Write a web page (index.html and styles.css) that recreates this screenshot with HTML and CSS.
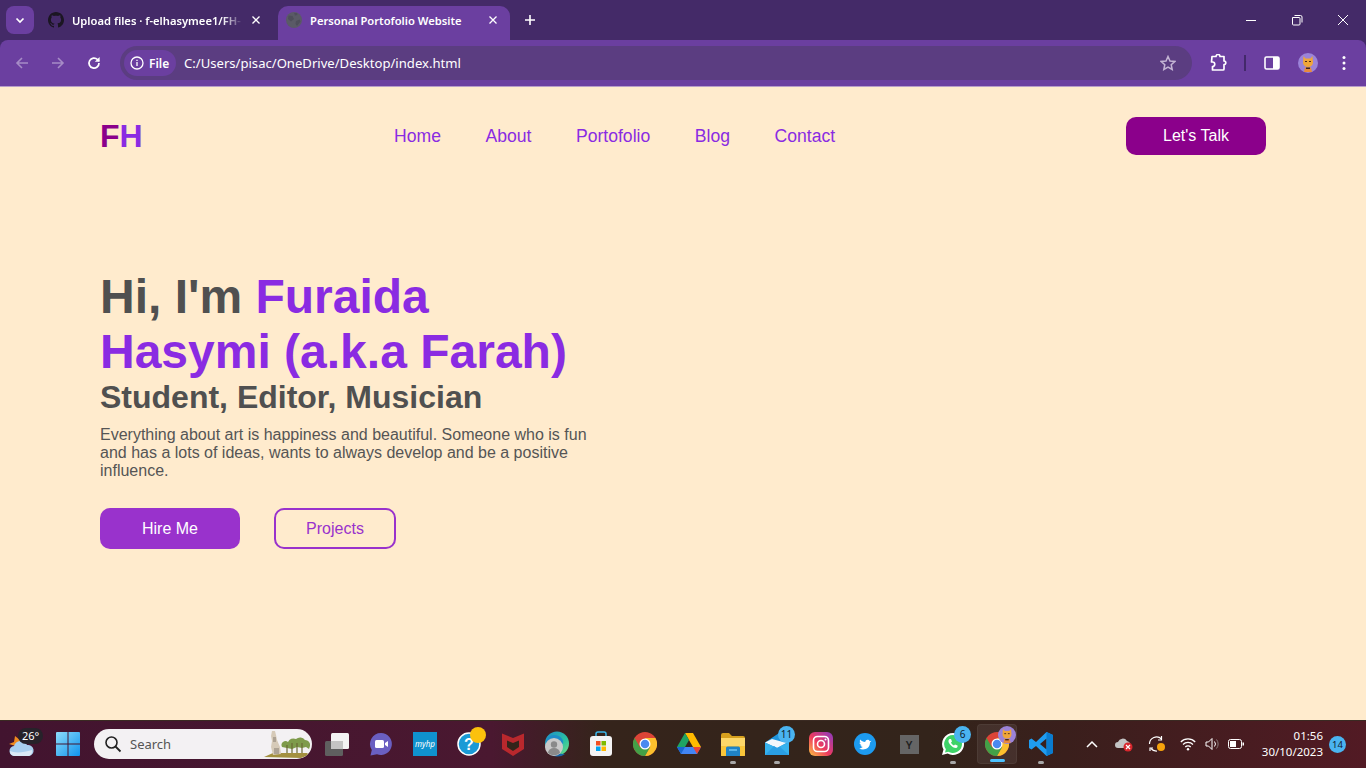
FILE: index.html
```html
<!DOCTYPE html>
<html lang="en">
<head>
<meta charset="utf-8">
<title>Personal Portofolio Website</title>
<link rel="stylesheet" href="styles.css">
</head>
<body>
<header class="browser">
  <div class="tabstrip">
    <button class="tab-search"><svg width="12" height="12" viewBox="0 0 12 12"><path d="M2.5 4.5 6 8l3.5-3.5" fill="none" stroke="#fff" stroke-width="1.7"/></svg></button>
    <div class="tab first">
      <svg class="fav" width="16" height="16" viewBox="0 0 16 16"><path fill="#1b1622" d="M8 0C3.6 0 0 3.6 0 8c0 3.5 2.3 6.5 5.5 7.6.4.1.5-.2.5-.4v-1.4c-2.2.5-2.7-1-2.7-1-.4-.9-.9-1.2-.9-1.2-.7-.5.1-.5.1-.5.8.1 1.2.8 1.2.8.7 1.2 1.9.9 2.3.7.1-.5.3-.9.5-1.1-1.8-.2-3.6-.9-3.6-4 0-.9.3-1.6.8-2.1-.1-.2-.4-1 .1-2.1 0 0 .7-.2 2.2.8.6-.2 1.3-.3 2-.3s1.4.1 2 .3c1.5-1 2.2-.8 2.2-.8.4 1.1.2 1.9.1 2.1.5.6.8 1.3.8 2.1 0 3.1-1.9 3.7-3.7 3.9.3.3.6.8.6 1.5v2.2c0 .2.1.5.6.4C13.7 14.5 16 11.5 16 8c0-4.4-3.6-8-8-8z"/></svg>
      <span class="tab-title faded">Upload files · f-elhasymee1/FH-</span>
      <svg class="tab-x" width="10" height="10" viewBox="0 0 10 10"><path d="M1.500 1.500l7 7m0-7l-7 7" stroke="#fff" stroke-width="1.300"/></svg>
    </div>
    <div class="tab active">
      <svg class="fav" width="16" height="16" viewBox="0 0 16 16"><circle cx="8" cy="8" r="8" fill="#5a5a66"/><path d="M2.500 3.500l4 .5 1.500 3-3 2.500-3-2.500zM10 9l3.500-1.500 1 2-3.500 4.500-1.500-2zM8 1h3l.5 2-2.500.5z" fill="#4e4e5a"/></svg>
      <span class="tab-title">Personal Portofolio Website</span>
      <svg class="tab-x" width="10" height="10" viewBox="0 0 10 10"><path d="M1.500 1.500l7 7m0-7l-7 7" stroke="#fff" stroke-width="1.300"/></svg>
    </div>
    <svg class="newtab" width="12" height="12" viewBox="0 0 12 12"><path d="M6 1v10M1 6h10" stroke="#fff" stroke-width="1.600"/></svg>
    <div class="win-controls">
      <svg width="12" height="12" viewBox="0 0 12 12"><path d="M1 6.500h10" stroke="#fff"/></svg>
      <svg width="12" height="12" viewBox="0 0 12 12"><path d="M1.500 3.500h6.500a1 1 0 0 1 1 1V10a1 1 0 0 1-1 1H2.500a1 1 0 0 1-1-1zM3.500 1.500h6a1.500 1.500 0 0 1 1.500 1.500v5.500" fill="none" stroke="#fff"/></svg>
      <svg width="12" height="12" viewBox="0 0 12 12"><path d="M1 1l10 10m0-10L1 11" stroke="#fff"/></svg>
    </div>
  </div>
  <div class="toolbar">
    <svg class="tb-ico" width="16" height="16" viewBox="0 0 16 16"><path d="M14 8H3M8 3L3 8l5 5" fill="none" stroke="#a68cc6" stroke-width="1.600"/></svg>
    <svg class="tb-ico" width="16" height="16" viewBox="0 0 16 16"><path d="M2 8h11M8 3l5 5-5 5" fill="none" stroke="#a68cc6" stroke-width="1.600"/></svg>
    <svg class="tb-ico" width="16" height="16" viewBox="0 0 16 16"><path d="M13 8a5 5 0 1 1-1.500-3.500L13 6" fill="none" stroke="#fff" stroke-width="1.700"/><path d="M13.600 2v4.800H8.800z" fill="#fff"/></svg>
    <div class="omnibox">
      <div class="chip">
        <svg width="14" height="14" viewBox="0 0 14 14"><circle cx="7" cy="7" r="6" fill="none" stroke="#fff" stroke-width="1.300"/><path d="M7 6v4M7 3.800v1.200" stroke="#fff" stroke-width="1.300"/></svg>
        <span>File</span>
      </div>
      <span class="url">C:/Users/pisac/OneDrive/Desktop/index.html</span>
      <svg class="star" width="16" height="16" viewBox="0 0 16 16"><path d="M8 1.500l2 4.500 4.800.5-3.600 3.200 1 4.800L8 12.100l-4.200 2.400 1-4.800L1.200 6.500 6 6z" fill="none" stroke="#c4b5d4" stroke-width="1.500"/></svg>
    </div>
    <div class="tb-right">
      <svg width="18" height="18" viewBox="0 0 18 18"><path d="M3 2.500h4a2 2 0 0 1 4 0h4v4.500a1.800 1.800 0 0 1 0 3.600V15a1 1 0 0 1-1 1H3.500v-3.500a2 2 0 0 0 0-4.500H2.500z" fill="none" stroke="#fff" stroke-width="1.700" stroke-linejoin="round"/></svg>
      <span class="tb-sep"></span>
      <svg width="16" height="16" viewBox="0 0 16 16"><rect x="1" y="2" width="14" height="12" rx="1.500" fill="none" stroke="#fff" stroke-width="1.600"/><rect x="9" y="2" width="6" height="12" fill="#fff"/></svg>
      <svg width="20" height="20" viewBox="0 0 20 20"><circle cx="10" cy="10" r="10" fill="#9b83d8"/><path d="M5.500 3l2 2.500h5l2-2.500.5 6.500a5 4.500 0 0 1-10 0z" fill="#f0a63a"/><path d="M7 14.500h6l1 4.500H6z" fill="#e98a3c"/><path d="M8 14.500h4v1.500H8z" fill="#40261c"/><path d="M7 8.500h2M11 8.500h2" stroke="#4a2a1a"/></svg>
      <svg width="4" height="16" viewBox="0 0 4 16"><circle cx="2" cy="2.500" r="1.500" fill="#fff"/><circle cx="2" cy="8" r="1.500" fill="#fff"/><circle cx="2" cy="13.500" r="1.500" fill="#fff"/></svg>
    </div>
  </div>
</header>

<div class="page">
  <nav class="site-nav">
    <a class="logo"><span class="logo-f">F</span>H</a>
    <ul class="links">
      <li>Home</li>
      <li>About</li>
      <li>Portofolio</li>
      <li>Blog</li>
      <li>Contact</li>
    </ul>
    <button class="talk">Let's Talk</button>
  </nav>
  <section class="hero">
    <h1>Hi, I'm <span class="accent">Furaida Hasymi (a.k.a Farah)</span></h1>
    <h2>Student, Editor, Musician</h2>
    <p>Everything about art is happiness and beautiful. Someone who is fun and has a lots of ideas, wants to always develop and be a positive influence.</p>
    <div class="actions">
      <button class="btn hire">Hire Me</button>
      <button class="btn projects">Projects</button>
    </div>
  </section>
</div>

<footer class="taskbar">
  <div class="weather">
    <svg width="26" height="24" viewBox="0 0 26 24"><path d="M0 10l5-2 1-6 5 4 5 1-6 6z" fill="#f08a1e"/><path d="M6 22a5 5 0 0 1-1-10 7 7 0 0 1 13-1 5.500 5.500 0 0 1 2 11z" fill="#a9cfef"/><path d="M5 22a5 5 0 0 1-4-5c4 2 13 2 22-1a5.500 5.500 0 0 1-3 6z" fill="#dbe9f6"/></svg>
    <span class="temp">26°</span>
  </div>
  <div class="slot start"><svg width="24" height="24" viewBox="0 0 24 24"><defs><linearGradient id="win" x1="0" y1="0" x2="1" y2="1"><stop offset="0" stop-color="#8edcf9"/><stop offset="1" stop-color="#0f93ee"/></linearGradient></defs><path d="M1 0h10.500v11.500H0V1a1 1 0 0 1 1-1zM12.500 0H23a1 1 0 0 1 1 1v10.500H12.500zM0 12.500h11.500V24H1a1 1 0 0 1-1-1zM12.500 12.500H24V23a1 1 0 0 1-1 1H12.500z" fill="url(#win)"/></svg></div>
  <div class="search">
    <svg width="18" height="18" viewBox="0 0 18 18"><circle cx="7.500" cy="7.500" r="5.500" fill="none" stroke="#222" stroke-width="1.600"/><path d="M11.500 11.500l5 5" stroke="#222" stroke-width="1.800"/></svg>
    <span>Search</span>
    <svg class="search-art" width="48" height="28" viewBox="0 0 48 28"><path d="M0 27l9-4h34l2 2-8 3z" fill="#a3903f"/><path d="M8 1h3l1 4 1 5 3 7 1 7-8 1-2-8 1-6-1-5z" fill="#d6cab8"/><path d="M9 7h3v5H9zM10 18h5v6h-5z" fill="#ada294"/><path d="M18 17a4 4 0 0 1 6-5 6 6 0 0 1 8-3 6 6 0 0 1 9 1 5 5 0 0 1 5 6l-1 3-3-2-4 1-5-1-5 2-5-1z" fill="#7e9b4b"/><path d="M23 15v8M28 13v10M33 13v10M38 13v10" stroke="#6a6a35" stroke-width="1.200"/></svg>
  </div>
  <div class="slot"><svg width="26" height="24" viewBox="0 0 26 24"><rect x="1" y="9" width="18" height="15" rx="1.500" fill="#5f5f5f"/><rect x="7" y="1" width="18" height="16" rx="1.500" fill="#f3f3f3"/><rect x="7" y="9" width="12" height="8" fill="#c4c4c4"/></svg></div>
  <div class="slot"><svg width="24" height="24" viewBox="0 0 24 24"><path d="M12 1a11 11 0 1 1-4 21.300L1.500 23.500 2.800 18A11 11 0 0 1 12 1z" fill="#6a5fc1"/><rect x="6" y="8" width="9" height="8" rx="1.500" fill="#fff"/><path d="M16 11l3-2v6l-3-2z" fill="#fff"/></svg></div>
  <div class="slot"><span class="myhp">myhp</span></div>
  <div class="slot"><svg width="26" height="26" viewBox="0 0 26 26"><circle cx="13" cy="13" r="11" fill="#1a9ad6" stroke="#fff" stroke-width="1.500"/><text x="13" y="19" class="help-q">?</text></svg><span class="dot-yellow"></span></div>
  <div class="slot"><svg width="22" height="24" viewBox="0 0 22 24"><path d="M0 1.500L11 6 22 1.500V17L11 24 0 17z" fill="#b9282d"/><path d="M5 8.500l6 2.500 6-2.500V15l-6 4-6-4z" fill="#33241a"/></svg></div>
  <div class="slot"><svg width="26" height="26" viewBox="0 0 26 26"><defs><linearGradient id="edge" x1="0" y1="0" x2="1" y2="1"><stop offset="0" stop-color="#1d8cc9"/><stop offset=".6" stop-color="#2bc3a2"/><stop offset="1" stop-color="#7de07a"/></linearGradient></defs><circle cx="13" cy="12.500" r="12" fill="url(#edge)"/><path d="M5 22a12 12 0 0 0 16 1z" fill="#1668a8"/><path d="M10 4a8 8 0 0 0-8 8l3 3 14-2c1-5-3-9-9-9z" fill="#1d8cc9"/><circle cx="10" cy="16" r="9" fill="#c9c9c9"/><circle cx="10" cy="13.500" r="3.200" fill="#8a8a8a"/><path d="M4 22a6 5 0 0 1 12 0 9 9 0 0 1-12 0z" fill="#8a8a8a"/></svg></div>
  <div class="slot"><svg width="24" height="26" viewBox="0 0 24 26"><path d="M7 6V3a2 2 0 0 1 2-2h6a2 2 0 0 1 2 2v3" fill="none" stroke="#3bb6ea" stroke-width="1.500"/><rect x="1" y="5" width="22" height="20" rx="3" fill="#f4f4f4"/><rect x="7" y="10" width="4.500" height="4.500" fill="#f25022"/><rect x="12.500" y="10" width="4.500" height="4.500" fill="#7fba00"/><rect x="7" y="15.500" width="4.500" height="4.500" fill="#00a4ef"/><rect x="12.500" y="15.500" width="4.500" height="4.500" fill="#ffb900"/></svg></div>
  <div class="slot"><svg width="24" height="24" viewBox="0 0 48 48"><circle cx="24" cy="24" r="24" fill="#db4437"/><path d="M24 48A24 24 0 0 0 44.800 12H24l10 17.500z" fill="#fbc02d"/><path d="M24 48 34.400 30 24 33 13.600 30 3.200 12A24 24 0 0 0 24 48z" fill="#43a047"/><circle cx="24" cy="24" r="11" fill="#fff"/><circle cx="24" cy="24" r="8.500" fill="#4a89f0"/></svg></div>
  <div class="slot"><svg width="24" height="22" viewBox="0 0 24 22"><path d="M8 0h8l8 14h-8z" fill="#ffba00"/><path d="M8 0l4 7-4 7H0z" fill="#1fa463"/><path d="M0 14h24l-4 7H4z" fill="#4285f4"/><path d="M0 14h8l-4 7z" fill="#1967d2"/><path d="M16 14h8l-4 7z" fill="#ea4335"/></svg></div>
  <div class="slot running"><svg width="24" height="23" viewBox="0 0 24 23"><path d="M0 2a2 2 0 0 1 2-2h6l3 3h11a2 2 0 0 1 2 2v3H0z" fill="#d6a01e"/><path d="M0 5h24v17a1 1 0 0 1-1 1H1a1 1 0 0 1-1-1z" fill="#fcd769"/><path d="M0 13h24v9a1 1 0 0 1-1 1H1a1 1 0 0 1-1-1z" fill="#f8c53a"/><path d="M5 15a1.500 1.500 0 0 1 1.500-1.500h11A1.500 1.500 0 0 1 19 15v8H5z" fill="#1f83c6"/><rect x="8" y="16" width="8" height="2" fill="#5ab4e8"/></svg></div>
  <div class="slot running"><svg width="24" height="22" viewBox="0 0 24 22"><path d="M0 9.500L14 0h3v6l7 3v13H0z" fill="#1f94dc"/><path d="M0 9.500L7 6l11 3 5 0L12 15z" fill="#f2f7fb"/><path d="M0 9.500L12 15 24 9v13H0z" fill="#35b2ee"/><path d="M0 22l9-9 3 2 3-1 9 8z" fill="#2a9fe4"/></svg><span class="badge">11</span></div>
  <div class="slot"><svg width="24" height="24" viewBox="0 0 24 24"><defs><linearGradient id="ig" x1="0" y1="1" x2="1" y2="0"><stop offset="0" stop-color="#fcc642"/><stop offset=".45" stop-color="#ee3a5e"/><stop offset="1" stop-color="#8a3ac4"/></linearGradient></defs><rect width="24" height="24" rx="6" fill="url(#ig)"/><rect x="4.500" y="4.500" width="15" height="15" rx="4" fill="none" stroke="#fff" stroke-width="1.600"/><circle cx="12" cy="12" r="3.500" fill="none" stroke="#fff" stroke-width="1.600"/><circle cx="16.500" cy="7.500" r="1" fill="#fff"/></svg></div>
  <div class="slot"><svg width="22" height="22" viewBox="0 0 22 22"><circle cx="11" cy="11" r="11" fill="#1d9bf0"/><path d="M5 15.500c5 2.500 11 0 11-6l1.500-1.800-1.800.5c-.8-2-4-2-4.500.8-2 0-4-1-5-2.500-.8 1.500-.3 3 .8 3.800L5.500 9.600c0 1.300 1 2.400 2.300 2.700H6.500c.3 1 1.300 1.700 2.300 1.700-1 .8-2.500 1.500-3.800 1.500z" fill="#fff"/></svg></div>
  <div class="slot"><span class="y-box">Y</span></div>
  <div class="slot running"><svg width="24" height="24" viewBox="0 0 24 24"><path d="M12 1a11 11 0 1 1-5.300 20.600L1 23l1.500-5.500A11 11 0 0 1 12 1z" fill="#fff"/><path d="M12 3a9 9 0 1 1-4.700 16.700L4 20.500l.9-3.200A9 9 0 0 1 12 3z" fill="#3ed368"/><path d="M8.500 7c-1.500 1-1.500 3 .5 5.500s4 3.500 6 3.500c1 0 2-1.500 1.500-2.500l-2.500-1-1 1c-1.500-.5-2.500-1.800-3-3l1-1-1-2.500z" fill="#fff"/></svg><span class="badge">6</span></div>
  <div class="slot open"><svg width="24" height="24" viewBox="0 0 48 48"><circle cx="24" cy="24" r="24" fill="#db4437"/><path d="M24 48A24 24 0 0 0 44.800 12H24l10 17.500z" fill="#fbc02d"/><path d="M24 48 34.400 30 24 33 13.600 30 3.200 12A24 24 0 0 0 24 48z" fill="#43a047"/><circle cx="24" cy="24" r="11" fill="#fff"/><circle cx="24" cy="24" r="8.500" fill="#4a89f0"/></svg><svg class="chrome-avatar" width="18" height="18" viewBox="0 0 20 20"><circle cx="10" cy="10" r="10" fill="#9b83d8"/><path d="M5.500 3l2 2.500h5l2-2.500.5 6.500a5 4.500 0 0 1-10 0z" fill="#f0a63a"/><path d="M7 14.500h6l1 4.500H6z" fill="#e98a3c"/><path d="M8 14.500h4v1.500H8z" fill="#40261c"/><path d="M7 8.500h2M11 8.500h2" stroke="#4a2a1a"/></svg></div>
  <div class="slot running"><svg width="24" height="24" viewBox="0 0 24 24"><path d="M17.500 0L24 3v18l-6.500 3L7 14l-4.500 3.500L0 16V8l2.500-1.500L7 10zM17.500 6.500L11 12l6.500 5.500z" fill="#1f9cf0"/><path d="M17.500 0L24 3v18l-6.500 3z" fill="#0a7ccf"/></svg></div>
  <div class="tray">
    <svg width="12" height="8" viewBox="0 0 12 8"><path d="M1 7l5-5 5 5" fill="none" stroke="#fff" stroke-width="1.500"/></svg>
    <svg class="t-cloud" width="18" height="16" viewBox="0 0 18 16"><path d="M3 12a3 3 0 0 1 0-6 5 5 0 0 1 9-1 4 4 0 0 1 2 7z" fill="#c4c4c4"/><circle cx="13" cy="11" r="4.500" fill="#d8262c"/><path d="M11 9l4 4m0-4l-4 4" stroke="#fff" stroke-width="1.200"/></svg>
    <svg class="t-sync" width="18" height="18" viewBox="0 0 18 18"><path d="M1.500 9a7 7 0 0 1 12-5M9 16a7 7 0 0 1-6-2.500" fill="none" stroke="#fff" stroke-width="1.200"/><path d="M13.500 1v4H10M2 16v-3h3" fill="none" stroke="#fff" stroke-width="1.200"/><circle cx="13" cy="12" r="4" fill="#f7a30c"/></svg>
    <svg class="t-wifi" width="16" height="14" viewBox="0 0 16 14"><path d="M.8 5a10 10 0 0 1 14.400 0M3 7.500a7 7 0 0 1 10 0M5.300 10a3.600 3.600 0 0 1 5.400 0" fill="none" stroke="#fff" stroke-width="1.200"/><circle cx="8" cy="12.300" r="1.200" fill="#fff"/></svg>
    <svg class="t-vol" width="16" height="14" viewBox="0 0 16 14"><path d="M1 5h2.500L7 1.500v11L3.500 9H1z" fill="none" stroke="#fff"/><path d="M9.500 4.500a4 4 0 0 1 0 5" fill="none" stroke="#fff"/><path d="M11.500 2.500a7 7 0 0 1 0 9" fill="none" stroke="#8a7a78"/></svg>
    <svg class="t-bat" width="16" height="10" viewBox="0 0 16 10"><rect x=".5" y=".5" width="13" height="9" rx="2" fill="none" stroke="#fff"/><rect x="2" y="2" width="6" height="6" fill="#fff"/><rect x="14.500" y="3.500" width="1.500" height="3" fill="#fff"/></svg>
    <div class="clock"><span>01:56</span><span>30/10/2023</span></div>
    <span class="notif">14</span>
  </div>
</footer>
</body>
</html>
```
FILE: styles.css
```css
* { box-sizing: border-box; }
html, body { margin: 0; height: 100%; }
body { width: 1366px; height: 768px; overflow: hidden; display: flex; flex-direction: column; font-family: "Liberation Sans", Arial, sans-serif; background: #ffebcd; }
button { font-family: inherit; border: 0; padding: 0; }

.browser { flex: none; height: 87px; background: #43296a; font-family: "Noto Sans", sans-serif; border-bottom: 1px solid #b79cc9; }
.tabstrip { height: 40px; display: flex; align-items: flex-end; position: relative; padding-left: 6px; background: #442a68; }
.tab-search { width: 28px; height: 28px; margin-bottom: 6px; border-radius: 8px; background: #6b3fa0; display: flex; align-items: center; justify-content: center; }
.tab { height: 34px; padding: 0 0 6px 8px; display: flex; align-items: center; gap: 8px; color: #fff; font-size: 11.200px; font-weight: 600; }
.first { width: 238px; margin-left: 6px; }
.first .tab-x { margin-right: 17px; }
.active { width: 232px; background: #6b3fa0; border-radius: 10px 10px 0 0; }
.tab-title { flex: 1; white-space: nowrap; overflow: hidden; }
.faded { -webkit-mask-image: linear-gradient(90deg, #000 88%, transparent); mask-image: linear-gradient(90deg, #000 88%, transparent); }
.tab-x { margin-right: 12px; flex: none; }
.fav { flex: none; }
.newtab { margin: 0 0 14px 14px; }
.win-controls { margin-left: auto; display: flex; gap: 34px; padding: 0 17px 14px 0; }
.toolbar { height: 46px; background: #6b3fa0; border-radius: 8px 8px 0 0; display: flex; align-items: center; padding-left: 14px; }
.tb-ico { margin-right: 20px; flex: none; }
.omnibox { width: 1072px; margin-left: -2px; height: 34px; border-radius: 17px; background: #5b3d81; display: flex; align-items: center; padding-left: 4px; color: #fff; }
.chip { height: 26px; width: 52px; border-radius: 13px; background: #6b3fa0; display: flex; align-items: center; gap: 5px; padding-left: 6px; font-size: 12px; font-weight: 600; }
.url { margin-left: 8px; font-size: 13.100px; flex: 1; white-space: nowrap; }
.star { margin-right: 16px; }
.tb-right { display: flex; align-items: center; margin-left: 17px; }
.tb-right svg:nth-of-type(1) { margin-right: 17px; }
.tb-sep { width: 2px; height: 16px; background: #43296a; margin-right: 18px; }
.tb-right svg:nth-of-type(2) { margin-right: 18px; }
.tb-right svg:nth-of-type(3) { margin-right: 24px; }

.page { flex: 1; min-height: 0; background: #ffebcd; padding: 30px 100px 0; }
.site-nav { display: grid; grid-template-columns: 294px 1fr 140px; align-items: center; height: 38px; }
.logo { font-size: 32px; font-weight: 700; color: #8a2be2; }
.logo-f { color: #8b008b; }
.links { list-style: none; margin: 0; padding: 0; display: flex; gap: 44.500px; font-size: 17.600px; color: #8a2be2; }
.talk { height: 38px; border-radius: 10px; background: #8b008b; color: #fff; font-size: 16px; }
.hero { margin-top: 114px; width: 500px; color: #505050; }
h1 { margin: 0; font-size: 48px; line-height: 55px; font-weight: 700; }
.accent { color: #8a2be2; }
h2 { margin: 0; font-size: 32px; line-height: 37px; font-weight: 700; }
.hero p { margin: 10px 0 0; font-size: 16px; line-height: 18px; color: #555; }
.actions { display: flex; gap: 34px; margin-top: 28px; }
.btn { height: 41px; border-radius: 10px; font-size: 16px; }
.hire { width: 140px; background: #9932cc; color: #fff; }
.projects { width: 122px; background: transparent; border: 2px solid #9932cc; color: #9932cc; }

.taskbar { flex: none; height: 48px; padding-bottom: 1px; display: flex; align-items: center; position: relative; color: #fff; font-family: "Noto Sans", sans-serif; background: linear-gradient(90deg, #42142f 0, #4a1830 36%, #35241b 44%, #33241b 68%, #3a1f1c 78%, #521a24 100%); border-top: 1px solid #3a2a22; }
.weather { width: 44px; height: 46px; position: relative; display: flex; align-items: flex-end; padding: 0 0 9px 9px; flex: none; }
.temp { position: absolute; left: 18px; top: 7px; height: 16px; padding: 0 4px; border-radius: 8px; background: #27222a; font-size: 11px; line-height: 16px; }
.slot { width: 44px; height: 46px; flex: none; display: flex; align-items: center; justify-content: center; position: relative; }
.start { width: 48px; }
.search { width: 218px; height: 30px; margin: 0 3px 0 2px; flex: none; border-radius: 15px; background: #f3f1f3; color: #555; display: flex; align-items: center; gap: 8px; padding-left: 10px; font-size: 13px; position: relative; overflow: hidden; }
.search-art { position: absolute; right: 0; top: 1px; }
.myhp { width: 24px; height: 24px; background: #0f92cf; font-size: 8px; font-style: italic; text-align: center; line-height: 24px; }
.help-q { font: 700 16px "Liberation Sans", sans-serif; fill: #fff; text-anchor: middle; }
.dot-yellow { position: absolute; top: 6px; left: 23px; width: 16px; height: 16px; border-radius: 50%; background: #fcc10c; }
.running::after { content: ""; position: absolute; left: 19px; bottom: 3px; width: 6px; height: 3px; border-radius: 2px; background: #a8a8a8; }
.badge { position: absolute; top: 5px; left: 23px; min-width: 17px; height: 17px; border-radius: 50%; background: #4ab4f0; color: #10202c; font-size: 10px; line-height: 17px; text-align: center; }
.y-box { width: 19px; height: 19px; background: #656565; color: #222; font-size: 11px; line-height: 19px; text-align: center; font-weight: 600; }
.open { width: 40px; height: 40px; margin: 0 2px; background: rgba(255,255,255,.07); border: 1px solid rgba(255,255,255,.05); border-radius: 4px; }
.open::after { content: ""; position: absolute; left: 12px; bottom: 1px; width: 15px; height: 3px; border-radius: 2px; background: #4cc2ff; }
.chrome-avatar { position: absolute; left: 20px; top: 1px; }
.tray { flex: 1; display: flex; align-items: center; padding-left: 23px; height: 46px; }
.t-cloud { margin-left: 17px; }
.t-sync { margin-left: 15px; }
.t-wifi { margin-left: 14px; }
.t-vol { margin-left: 9px; }
.t-bat { margin-left: 7px; }
.clock { margin-left: 17px; width: 62px; display: flex; flex-direction: column; align-items: flex-end; font-size: 11.500px; line-height: 16px; }
.notif { margin-left: 6px; width: 17px; height: 17px; border-radius: 50%; background: #4ab4f0; color: #10202c; font-size: 9.500px; line-height: 17px; text-align: center; }
```
